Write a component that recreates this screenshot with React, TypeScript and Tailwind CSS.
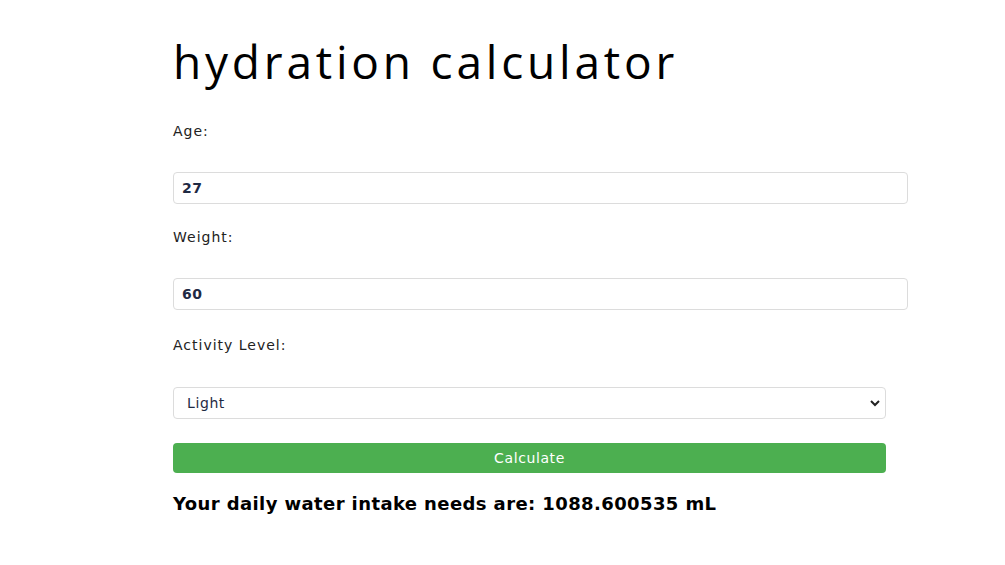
import { useState } from "react";

export default function App() {
  const [age, setAge] = useState("27");
  const [weight, setWeight] = useState("60");
  const [level, setLevel] = useState("light");

  return (
    <main className="min-h-[565px] w-[1005px] bg-white font-['DejaVu_Sans',Verdana,sans-serif] text-[#222]">
      <div className="ml-[173px] w-[713px] pt-[33px]">
        <h1 className="font-['Open_Sans',sans-serif] text-[46px] leading-[56px] tracking-[3.8px] text-black">
          hydration calculator
        </h1>

        <div className="mt-[33px] flex flex-col">
          <label className="text-[14px] leading-[18px] tracking-[1px]">Age:</label>
          <input
            className="mt-[32px] h-[32px] w-[735px] rounded-[4px] border border-[#dcdcdc] px-[8px] text-[14px] font-semibold tracking-[0.6px] text-[#1f2a44] outline-none"
            value={age}
            onChange={(e) => setAge(e.target.value)}
          />

          <label className="mt-[24px] text-[14px] leading-[18px] tracking-[1px]">Weight:</label>
          <input
            className="mt-[32px] h-[32px] w-[735px] rounded-[4px] border border-[#dcdcdc] px-[8px] text-[14px] font-semibold tracking-[0.6px] text-[#1f2a44] outline-none"
            value={weight}
            onChange={(e) => setWeight(e.target.value)}
          />

          <label className="mt-[26px] text-[14px] leading-[18px] tracking-[1px]">Activity Level:</label>
          <div className="relative mt-[33px]">
            <select
              className="h-[32px] w-[713px] appearance-none rounded-[4px] border border-[#dcdcdc] bg-white px-[13px] text-[14px] tracking-[0.6px] text-[#1f2a44] outline-none"
              value={level}
              onChange={(e) => setLevel(e.target.value)}
            >
              <option value="light">Light</option>
              <option value="moderate">Moderate</option>
              <option value="heavy">Heavy</option>
            </select>
            <svg
              className="pointer-events-none absolute right-[6px] top-[12px] h-[8px] w-[10px]"
              viewBox="0 0 10 7"
              fill="none"
              stroke="#222"
              strokeWidth="2"
            >
              <path d="M1 1.5l4 4 4-4" />
            </svg>
          </div>

          <button className="mt-[24px] h-[30px] w-[713px] rounded-[4px] bg-[#4caf50] text-[14px] tracking-[0.6px] text-white">
            Calculate
          </button>

          <p className="mt-[17px] text-[18px] font-bold tracking-[0.4px] text-black">
            Your daily water intake needs are: 1088.600535 mL
          </p>
        </div>
      </div>
    </main>
  );
}
